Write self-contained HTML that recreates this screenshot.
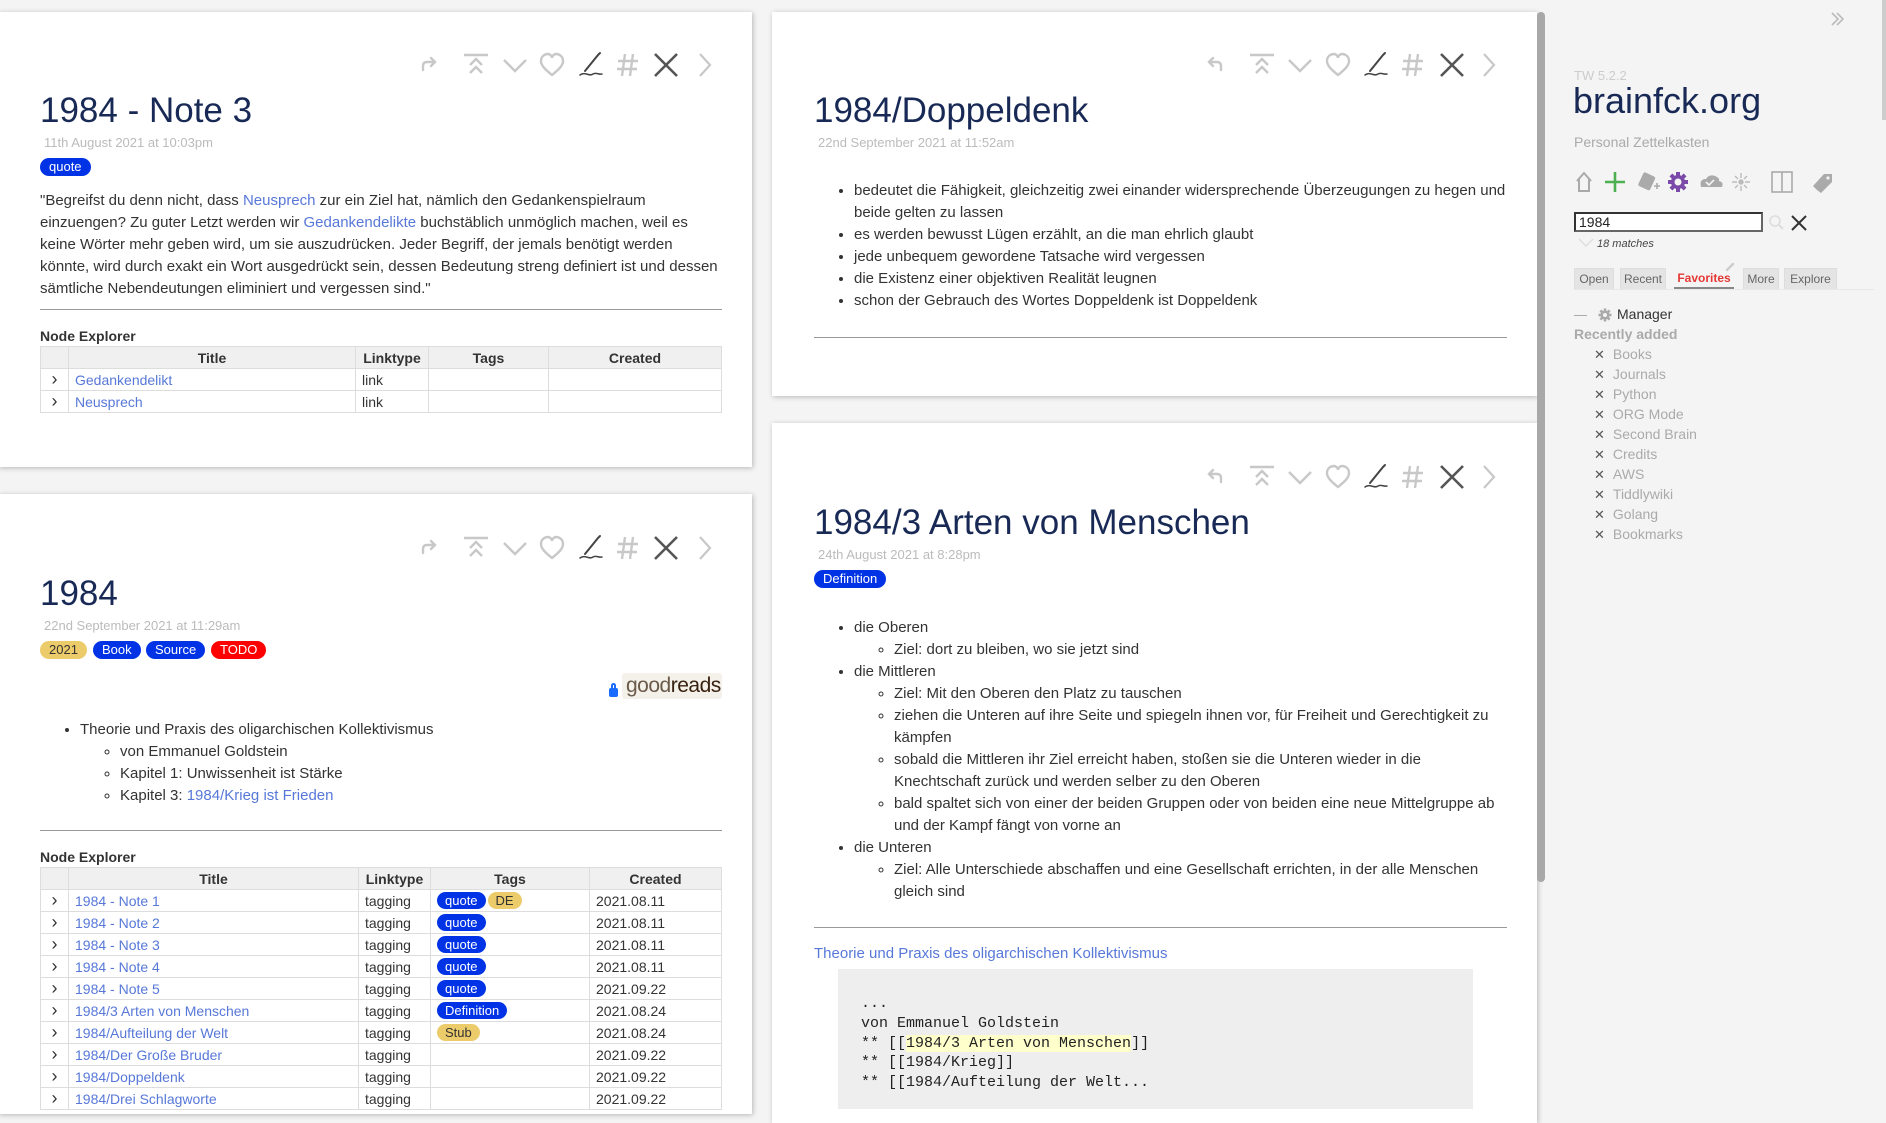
<!DOCTYPE html>
<html><head><meta charset="utf-8">
<style>
*{box-sizing:border-box;margin:0;padding:0}
html,body{width:1886px;height:1088px;overflow:hidden;background:#f4f4f4;font-family:"Liberation Sans",sans-serif;color:#333}
.card{position:absolute;background:#fff;box-shadow:1px 1px 5px rgba(0,0,0,.25)}
.a{position:absolute;white-space:nowrap}
.title{font-size:35px;color:#182955}
.date{font-size:13px;color:#bbb}
.tag{position:absolute;height:18px;line-height:18px;border-radius:9px;font-size:13px;color:#fff;padding:0 9px;background:#0033e6}
.y{background:#eccb6a;color:#333}
.r{background:#f00}
.txt{font-size:15px;line-height:22px;color:#333}
a,.l{color:#5778d8;text-decoration:none}
hr{position:absolute;border:0;border-top:1.5px solid #999;height:0}
table{position:absolute;border-collapse:collapse;font-size:14px;table-layout:fixed}
td,th{border:1px solid #ddd;height:22px;padding:0 6px;white-space:nowrap;overflow:hidden}
th{background:#f0f0f0;font-weight:bold;text-align:center;color:#333}
td.c{text-align:center;padding:0;font-size:18px;color:#333}
.t2{display:inline-block;height:17px;line-height:17px;border-radius:9px;font-size:13px;color:#fff;padding:0 8px;background:#0033e6;margin-right:2px}
ul{list-style:disc}
.sb{font-size:14px;color:#aaa}
.sb div{height:20px;line-height:20px}
.sb span{color:#555;font-size:13px;margin-right:8px}
.tab{position:absolute;top:268px;height:21px;line-height:21px;background:#e4e4e4;border:1px solid #ddd;border-bottom:0;font-size:12px;color:#666;text-align:center}
pre{font-family:"Liberation Mono",monospace;white-space:pre !important}
</style></head><body>
<svg width="0" height="0" style="position:absolute">
<defs>
<g id="fw" fill="none" stroke="#c8c8c8" stroke-width="2.4" stroke-linecap="round"><path d="M-6 5 V1 Q-6 -3 -2 -3 H6 M2 -7 L6 -3 L2 1"/></g>
<g id="bk" fill="none" stroke="#c8c8c8" stroke-width="2.4" stroke-linecap="round"><path d="M6 5 V1 Q6 -3 2 -3 H-6 M-2 -7 L-6 -3 L-2 1"/></g>
<g id="tb" fill="none" stroke="#c8c8c8" stroke-width="2.4"><path d="M-12 -10 H12 M-6 0 L0 -6 L6 0 M-6 8 L0 2 L6 8"/></g>
<g id="dn" fill="none" stroke="#c8c8c8" stroke-width="2.4"><path d="M-11 -5 L0 6 L11 -5"/></g>
<g id="ht" fill="none" stroke="#c8c8c8" stroke-width="2.4"><path d="M0 10 C-6 5 -11 1 -11 -4 C-11 -9 -7 -11 -4 -11 C-2 -11 0 -9 0 -7 C0 -9 2 -11 4 -11 C7 -11 11 -9 11 -4 C11 1 6 5 0 10Z"/></g>
<g id="pn" fill="none" stroke="#444" stroke-width="2" stroke-linecap="round"><path d="M-6 6 L7 -10 M9 -12 L7 -10" /><path d="M-11 10 C-6 6 -2 12 2 9 C5 7 8 10 11 9" stroke-width="1.5"/></g>
<g id="hs" fill="none" stroke="#c8c8c8" stroke-width="2.4"><path d="M-3 -11 L-6 11 M5 -11 L2 11 M-10 -4 H10 M-11 4 H9"/></g>
<g id="xx" fill="none" stroke="#555" stroke-width="2.6"><path d="M-11 -11 L11 11 M11 -11 L-11 11"/></g>
<g id="gt" fill="none" stroke="#c8c8c8" stroke-width="2.2"><path d="M-5 -11 L5 0 L-5 11"/></g>
<g id="tbL"><use href="#fw" x="429"/><use href="#tb" x="476"/><use href="#dn" x="515"/><use href="#ht" x="552"/><use href="#pn" x="591"/><use href="#hs" x="628"/><use href="#xx" x="666"/><use href="#gt" x="705"/></g>
<g id="tbR"><use href="#bk" x="1215"/><use href="#tb" x="1262"/><use href="#dn" x="1300"/><use href="#ht" x="1338"/><use href="#pn" x="1376"/><use href="#hs" x="1413"/><use href="#xx" x="1452"/><use href="#gt" x="1489"/></g>
</defs></svg>

<div class="card" style="left:-2px;top:12px;width:754px;height:455px"></div>
<div class="card" style="left:-2px;top:494px;width:754px;height:620px"></div>
<div class="card" style="left:772px;top:12px;width:765px;height:384px"></div>
<div class="card" style="left:772px;top:423px;width:765px;height:700px"></div>

<svg class="a" style="left:0;top:0" width="1886" height="1088">
<use href="#tbL" y="65"/>
<use href="#tbL" y="548"/>
<use href="#tbR" y="65"/>
<use href="#tbR" y="477"/>
</svg>

<div class="a title" style="left:40px;top:91px">1984 - Note 3</div>
<div class="a date" style="left:44px;top:135px">11th August 2021 at 10:03pm</div>
<div class="tag" style="left:40px;top:158px">quote</div>
<div class="a txt" style="left:40px;top:190px">"Begreifst du denn nicht, dass <span class="l">Neusprech</span> zur ein Ziel hat, nämlich den Gedankenspielraum<br>einzuengen? Zu guter Letzt werden wir <span class="l">Gedankendelikte</span> buchstäblich unmöglich machen, weil es<br>keine Wörter mehr geben wird, um sie auszudrücken. Jeder Begriff, der jemals benötigt werden<br>könnte, wird durch exakt ein Wort ausgedrückt sein, dessen Bedeutung streng definiert ist und dessen<br>sämtliche Nebendeutungen eliminiert und vergessen sind."</div>
<hr style="left:40px;top:309px;width:682px">
<div class="a" style="left:40px;top:328px;font-size:14px;font-weight:bold">Node Explorer</div>
<table style="left:40px;top:346px;width:682px">
<colgroup><col style="width:28px"><col style="width:287px"><col style="width:73px"><col style="width:120px"><col></colgroup>
<tr><th></th><th>Title</th><th>Linktype</th><th>Tags</th><th>Created</th></tr>
<tr><td class="c">›</td><td><span class="l">Gedankendelikt</span></td><td>link</td><td></td><td></td></tr>
<tr><td class="c">›</td><td><span class="l">Neusprech</span></td><td>link</td><td></td><td></td></tr>
</table>

<div class="a title" style="left:40px;top:574px">1984</div>
<div class="a date" style="left:44px;top:618px">22nd September 2021 at 11:29am</div>
<div class="tag y" style="left:40px;top:641px">2021</div>
<div class="tag" style="left:93px;top:641px">Book</div>
<div class="tag" style="left:146px;top:641px">Source</div>
<div class="tag r" style="left:211px;top:641px">TODO</div>
<div class="a" style="left:609px;top:688px;width:9px;height:9px;background:#1a6cff;border-radius:2px"></div>
<div class="a" style="left:611px;top:683px;width:5px;height:7px;border:2px solid #1a6cff;border-bottom:0;border-radius:3px 3px 0 0"></div>
<div class="a" style="left:622px;top:673px;width:100px;height:26px;background:#f4f1ea;border-radius:3px;font-size:21px;line-height:26px;color:#382110;padding-left:4px;letter-spacing:-0.5px"><span style="color:#6b5a4a">good</span>reads</div>
<ul class="a txt" style="left:80px;top:719px">
<li>Theorie und Praxis des oligarchischen Kollektivismus
<ul style="list-style:circle;margin-left:40px"><li>von Emmanuel Goldstein</li><li>Kapitel 1: Unwissenheit ist Stärke</li><li>Kapitel 3: <span class="l">1984/Krieg ist Frieden</span></li></ul></li></ul>
<hr style="left:40px;top:830px;width:682px">
<div class="a" style="left:40px;top:849px;font-size:14px;font-weight:bold">Node Explorer</div>
<table style="left:40px;top:867px;width:682px">
<colgroup><col style="width:28px"><col style="width:290px"><col style="width:72px"><col style="width:159px"><col></colgroup>
<tr><th></th><th>Title</th><th>Linktype</th><th>Tags</th><th>Created</th></tr>
<tr><td class="c">›</td><td class="l">1984 - Note 1</td><td>tagging</td><td><span class="t2">quote</span><span class="t2" style="background:#eccb6a;color:#333">DE</span></td><td>2021.08.11</td></tr>
<tr><td class="c">›</td><td class="l">1984 - Note 2</td><td>tagging</td><td><span class="t2">quote</span></td><td>2021.08.11</td></tr>
<tr><td class="c">›</td><td class="l">1984 - Note 3</td><td>tagging</td><td><span class="t2">quote</span></td><td>2021.08.11</td></tr>
<tr><td class="c">›</td><td class="l">1984 - Note 4</td><td>tagging</td><td><span class="t2">quote</span></td><td>2021.08.11</td></tr>
<tr><td class="c">›</td><td class="l">1984 - Note 5</td><td>tagging</td><td><span class="t2">quote</span></td><td>2021.09.22</td></tr>
<tr><td class="c">›</td><td class="l">1984/3 Arten von Menschen</td><td>tagging</td><td><span class="t2">Definition</span></td><td>2021.08.24</td></tr>
<tr><td class="c">›</td><td class="l">1984/Aufteilung der Welt</td><td>tagging</td><td><span class="t2" style="background:#eccb6a;color:#333">Stub</span></td><td>2021.08.24</td></tr>
<tr><td class="c">›</td><td class="l">1984/Der Große Bruder</td><td>tagging</td><td></td><td>2021.09.22</td></tr>
<tr><td class="c">›</td><td class="l">1984/Doppeldenk</td><td>tagging</td><td></td><td>2021.09.22</td></tr>
<tr><td class="c">›</td><td class="l">1984/Drei Schlagworte</td><td>tagging</td><td></td><td>2021.09.22</td></tr>
</table>

<div class="a title" style="left:814px;top:91px">1984/Doppeldenk</div>
<div class="a date" style="left:818px;top:135px">22nd September 2021 at 11:52am</div>
<ul class="a txt" style="left:854px;top:180px;width:653px;white-space:normal">
<li>bedeutet die Fähigkeit, gleichzeitig zwei einander widersprechende Überzeugungen zu hegen und beide gelten zu lassen</li>
<li>es werden bewusst Lügen erzählt, an die man ehrlich glaubt</li>
<li>jede unbequem gewordene Tatsache wird vergessen</li>
<li>die Existenz einer objektiven Realität leugnen</li>
<li>schon der Gebrauch des Wortes Doppeldenk ist Doppeldenk</li></ul>
<hr style="left:814px;top:337px;width:693px">

<div class="a title" style="left:814px;top:503px">1984/3 Arten von Menschen</div>
<div class="a date" style="left:818px;top:547px">24th August 2021 at 8:28pm</div>
<div class="tag" style="left:814px;top:570px">Definition</div>
<ul class="a txt" style="left:854px;top:617px;width:653px;white-space:normal">
<li>die Oberen<ul style="list-style:circle;margin-left:40px"><li>Ziel: dort zu bleiben, wo sie jetzt sind</li></ul></li>
<li>die Mittleren<ul style="list-style:circle;margin-left:40px"><li>Ziel: Mit den Oberen den Platz zu tauschen</li><li>ziehen die Unteren auf ihre Seite und spiegeln ihnen vor, für Freiheit und Gerechtigkeit zu kämpfen</li><li>sobald die Mittleren ihr Ziel erreicht haben, stoßen sie die Unteren wieder in die Knechtschaft zurück und werden selber zu den Oberen</li><li>bald spaltet sich von einer der beiden Gruppen oder von beiden eine neue Mittelgruppe ab und der Kampf fängt von vorne an</li></ul></li>
<li>die Unteren<ul style="list-style:circle;margin-left:40px"><li>Ziel: Alle Unterschiede abschaffen und eine Gesellschaft errichten, in der alle Menschen gleich sind</li></ul></li></ul>
<hr style="left:814px;top:927px;width:693px">
<div class="a l" style="left:814px;top:945px;font-size:15px">Theorie und Praxis des oligarchischen Kollektivismus</div>
<div class="a" style="left:838px;top:969px;width:635px;height:140px;background:#eee"></div>
<pre class="a" style="left:861px;top:994px;font-size:15px;line-height:19.8px;color:#222">...
von Emmanuel Goldstein
** [[<span style="background:#ffffcc">1984/3 Arten von Menschen</span>]]
** [[1984/Krieg]]
** [[1984/Aufteilung der Welt...</pre>

<div class="a" style="left:1537px;top:12px;width:8px;height:870px;background:#a8a8a8;border-radius:4px"></div>
<div class="a" style="left:1882px;top:0;width:4px;height:120px;background:#ccc"></div>

<svg class="a" style="left:1830px;top:11px" width="16" height="16"><path d="M2 2 L8 8 L2 14 M7 2 L13 8 L7 14" fill="none" stroke="#bbb" stroke-width="1.6"/></svg>
<div class="a" style="left:1574px;top:68px;font-size:13px;color:#ccc">TW 5.2.2</div>
<div class="a" style="left:1573px;top:80px;font-size:36px;color:#182955">brainfck.org</div>
<div class="a" style="left:1574px;top:134px;font-size:14px;color:#aaa">Personal Zettelkasten</div>
<svg class="a" style="left:1574px;top:169px" width="270" height="30">
<path d="M3 12 L10 4 L17 12 M5 10 V22 H15 V10" fill="none" stroke="#aaa" stroke-width="2"/>
<path d="M31 13 H51 M41 3 V23" stroke="#4caf50" stroke-width="2.6"/>
<g transform="translate(73 13) rotate(25)"><rect x="-7" y="-8" width="13" height="15" rx="2" fill="#aaa"/></g><path d="M80 17 H86 M83 14 V20" stroke="#aaa" stroke-width="1.6"/>
<g transform="translate(104 13)" fill="#7a4aa8"><circle r="7"/><rect x="-2" y="-10" width="4" height="20"/><rect x="-10" y="-2" width="20" height="4"/><rect x="-2" y="-10" width="4" height="20" transform="rotate(45)"/><rect x="-2" y="-10" width="4" height="20" transform="rotate(-45)"/><circle r="3.5" fill="#f4f4f4"/></g>
<path d="M127 18 Q125 10 132 10 Q135 5 141 7 Q146 9 145 12 Q150 13 148 18 Z" fill="#aaa"/><path d="M132 13 L135 16 L140 11" fill="none" stroke="#f4f4f4" stroke-width="1.6"/>
<g stroke="#bbb" stroke-width="1.4"><path d="M167 4 V9 M167 17 V22 M158 13 H163 M171 13 H176 M161 7 L164 10 M170 16 L173 19 M173 7 L170 10 M164 16 L161 19"/><circle cx="167" cy="13" r="2" fill="#bbb"/></g>
<rect x="198" y="3" width="20" height="20" fill="none" stroke="#aaa" stroke-width="1.6"/><path d="M208 3 V23" stroke="#aaa" stroke-width="1.6"/>
<path d="M243 21 L239 17 L250 5 L258 5 L258 13 L247 24 Z" fill="#aaa"/><circle cx="254" cy="9" r="1.6" fill="#f4f4f4"/>
</svg>
<div class="a" style="left:1574px;top:212px;width:189px;height:20px;background:#fff;border:2px solid #333;border-right-color:#666;border-bottom-color:#666;font-size:14px;line-height:16px;padding-left:3px;color:#222">1984</div>
<svg class="a" style="left:1767px;top:213px" width="50" height="20"><circle cx="8" cy="8" r="5" fill="none" stroke="#ddd" stroke-width="1.6"/><path d="M12 12 L16 16" stroke="#ddd" stroke-width="2"/><path d="M25 3 L39 17 M39 3 L25 17" stroke="#333" stroke-width="2"/></svg>
<svg class="a" style="left:1578px;top:238px" width="16" height="10"><path d="M1 1 L8 8 L15 1" fill="none" stroke="#ddd" stroke-width="1.4"/></svg>
<div class="a" style="left:1597px;top:238px;font-size:11px;font-style:italic;color:#444">18 matches</div>
<div class="a" style="left:1574px;top:289px;width:300px;border-top:1px solid #e8e8e8"></div>
<div class="tab" style="left:1574px;width:40px">Open</div>
<div class="tab" style="left:1620px;width:46px">Recent</div>
<div class="a" style="left:1674px;top:268px;width:60px;height:21px;line-height:21px;font-size:12px;font-weight:bold;color:#e53935;text-align:center;border-bottom:2px solid #888">Favorites</div>
<svg class="a" style="left:1725px;top:262px" width="10" height="10"><path d="M2 8 L8 2" stroke="#ccc" stroke-width="2.4" stroke-linecap="round"/></svg>
<div class="tab" style="left:1743px;width:36px">More</div>
<div class="tab" style="left:1784px;width:53px">Explore</div>
<div class="a" style="left:1574px;top:315px;width:13px;border-top:1px solid #aaa"></div>
<svg class="a" style="left:1598px;top:308px" width="14" height="14"><g transform="translate(7 7)" fill="#aaa"><circle r="4.5"/><rect x="-1.3" y="-6.5" width="2.6" height="13"/><rect x="-6.5" y="-1.3" width="13" height="2.6"/><rect x="-1.3" y="-6.5" width="2.6" height="13" transform="rotate(45)"/><rect x="-1.3" y="-6.5" width="2.6" height="13" transform="rotate(-45)"/><circle r="2" fill="#f4f4f4"/></g></svg>
<div class="a" style="left:1617px;top:306px;font-size:14px;color:#333">Manager</div>
<div class="a" style="left:1574px;top:326px;font-size:14px;font-weight:bold;color:#aaa">Recently added</div>
<div class="a sb" style="left:1594px;top:344px;white-space:normal">
<div><span>✕</span>Books</div>
<div><span>✕</span>Journals</div>
<div><span>✕</span>Python</div>
<div><span>✕</span>ORG Mode</div>
<div><span>✕</span>Second Brain</div>
<div><span>✕</span>Credits</div>
<div><span>✕</span>AWS</div>
<div><span>✕</span>Tiddlywiki</div>
<div><span>✕</span>Golang</div>
<div><span>✕</span>Bookmarks</div>
</div>
</body></html>
